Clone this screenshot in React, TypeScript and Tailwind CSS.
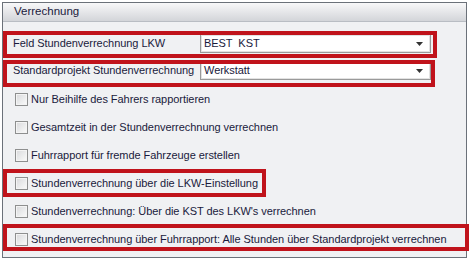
import React from "react";

function Checkbox() {
  return (
    <span className="inline-block w-[13px] h-[13px] shrink-0 border border-[#8e8f8f] bg-gradient-to-br from-[#d8d9db] to-[#fbfbfb] shadow-[inset_0_0_0_1px_#f4f4f4]" />
  );
}

function Select({ value }: { value: string }) {
  return (
    <div className="flex items-center w-[231px] h-[19px] bg-white border border-[#9a9a9a] shadow-[inset_0_0_0_1px_#e2e2e2] pl-[3px] pr-[7px]">
      <span className="flex-1 whitespace-pre">{value}</span>
      <svg width="7" height="4" viewBox="0 0 7 4">
        <path d="M0 0h7L3.5 4z" fill="#333" />
      </svg>
    </div>
  );
}

const checks = [
  "Nur Beihilfe des Fahrers rapportieren",
  "Gesamtzeit in der Stundenverrechnung verrechnen",
  "Fuhrrapport für fremde Fahrzeuge erstellen",
  "Stundenverrechnung über die LKW-Einstellung",
  "Stundenverrechnung: Über die KST des LKW's verrechnen",
  "Stundenverrechnung über Fuhrrapport: Alle Stunden über Standardprojekt verrechnen",
];

export default function App() {
  return (
    <div className="relative w-[469px] h-[260px] bg-white pt-[2px] pl-[2px] font-['Liberation_Sans',sans-serif] text-[11px] tracking-[-0.05px] text-[#1a1a3c]">
      <div className="w-[465px] h-[256px] border border-[#6b7179] bg-[#f0f1f3] flex flex-col">
        <div className="h-[19px] flex items-center pl-[11px] text-[11.5px] tracking-normal bg-gradient-to-b from-[#f8f8f9] to-[#d3d5d9] border-b border-[#b9bdc3]">
          Verrechnung
        </div>
        <div className="pt-[8px] flex flex-col">
          <div className="h-[27px] flex items-center pl-[10px]">
            <span className="w-[187px] whitespace-nowrap">Feld Stundenverrechnung LKW</span>
            <Select value="BEST  KST" />
          </div>
          <div className="h-[27px] flex items-center pl-[10px]">
            <span className="w-[187px] whitespace-nowrap">Standardprojekt Stundenverrechnung</span>
            <Select value="Werkstatt" />
          </div>
          <div className="h-[1px]" />
          {checks.map((c) => (
            <div key={c} className="h-[28px] flex items-center gap-[3px] pl-[12px]">
              <Checkbox />
              <span className="whitespace-nowrap">{c}</span>
            </div>
          ))}
        </div>
      </div>
      {/* annotation boxes */}
      <div className="absolute left-[3px] top-[31px] w-[434px] h-[27px] border-4 border-[#c0131b]" />
      <div className="absolute left-[3px] top-[60px] w-[432px] h-[27px] border-4 border-[#c0131b]" />
      <div className="absolute left-[3px] top-[169px] w-[263px] h-[28px] border-4 border-[#c0131b]" />
      <div className="absolute left-[3px] top-[224px] w-[466px] h-[27px] border-4 border-[#c0131b]" />
    </div>
  );
}
